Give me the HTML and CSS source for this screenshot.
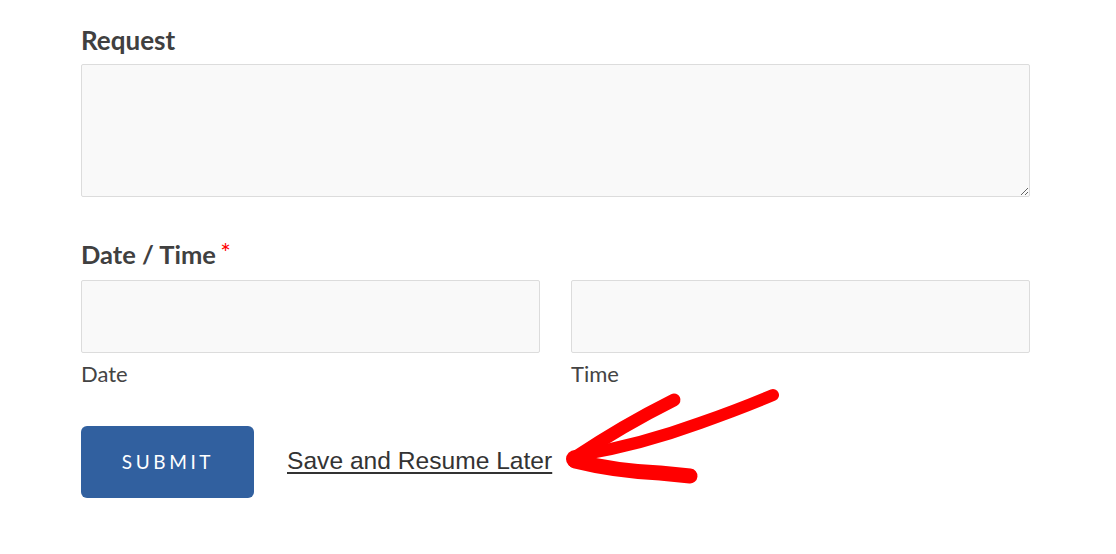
FILE: index.html
```html
<!DOCTYPE html>
<html>
<head>
<meta charset="utf-8">
<link rel="stylesheet" href="styles.css">
</head>
<body>
<form class="form">
  <div class="field">
    <label class="label">Request</label>
    <textarea class="textarea"></textarea>
  </div>
  <div class="field field-datetime">
    <label class="label">Date / Time <span class="req">*</span></label>
    <div class="row">
      <div class="col">
        <input class="input" type="text">
        <div class="sublabel">Date</div>
      </div>
      <div class="col">
        <input class="input" type="text">
        <div class="sublabel">Time</div>
      </div>
    </div>
  </div>
  <div class="actions">
    <button type="button" class="submit">SUBMIT</button>
    <a class="resume" href="#">Save and Resume Later</a>
  </div>
</form>
<svg class="arrow" width="1116" height="554" viewBox="0 0 1116 554">
  <g fill="none" stroke="#ff0000" stroke-linecap="round" stroke-linejoin="round">
    <path d="M576 457 Q 622 426 674 400" stroke-width="13"/>
    <path d="M580 455 Q 640 445 700 423 Q 740 409 773 395" stroke-width="12"/>
    <path d="M575 461 Q 615 471 660 473 L 690 476" stroke-width="15"/>
  </g>
  <circle cx="575" cy="459" r="9" fill="#ff0000"/>
</svg>
</body>
</html>
```
FILE: styles.css
```css
html, body {
  margin: 0;
  padding: 0;
  background: #ffffff;
}
body {
  position: relative;
  width: 1116px;
  height: 554px;
  overflow: hidden;
  font-family: Lato, "Liberation Sans", sans-serif;
}
.form {
  padding: 25px 0 0 81px;
  width: 949px;
}
.field {
  display: flex;
  flex-direction: column;
}
.label {
  font-size: 26px;
  font-weight: 700;
  line-height: 30px;
  color: #404040;
  margin-bottom: 9px;
}
.field-datetime {
  margin-top: 40px;
}
.field-datetime .label {
  font-size: 25.5px;
  margin-bottom: 11px;
}
.req {
  color: #ff0000;
  font-weight: 400;
  font-size: 25px;
  vertical-align: 2px;
  margin-left: -2px;
}
.textarea {
  box-sizing: border-box;
  width: 949px;
  height: 133px;
  margin: 0;
  background: #f9f9f9;
  border: 1px solid #dcdcdc;
  border-radius: 2px;
  display: block;
}
.row {
  display: flex;
  gap: 31px;
}
.col {
  display: flex;
  flex-direction: column;
  flex: 1;
}
.input {
  box-sizing: border-box;
  height: 73px;
  width: 100%;
  margin: 0;
  background: #f9f9f9;
  border: 1px solid #dcdcdc;
  border-radius: 2px;
}
.sublabel {
  margin-top: 9px;
  font-size: 22px;
  line-height: 24px;
  color: #444444;
}
.actions {
  margin-top: 40px;
  display: flex;
  align-items: center;
  gap: 33px;
}
.submit {
  width: 173px;
  height: 72px;
  border: none;
  border-radius: 6px;
  background: #31609f;
  color: #ffffff;
  font-family: Lato, "Liberation Sans", sans-serif;
  font-size: 19px;
  letter-spacing: 3.6px;
  padding: 0 0 2px 1px;
}
.resume {
  font-family: "Liberation Sans", Arial, sans-serif;
  font-size: 24.6px;
  color: #333333;
  text-decoration: underline;
  text-underline-offset: 3px;
  text-decoration-thickness: 2px;
  margin-top: -2px;
}
.arrow {
  position: absolute;
  left: 0;
  top: 0;
  pointer-events: none;
}
```
